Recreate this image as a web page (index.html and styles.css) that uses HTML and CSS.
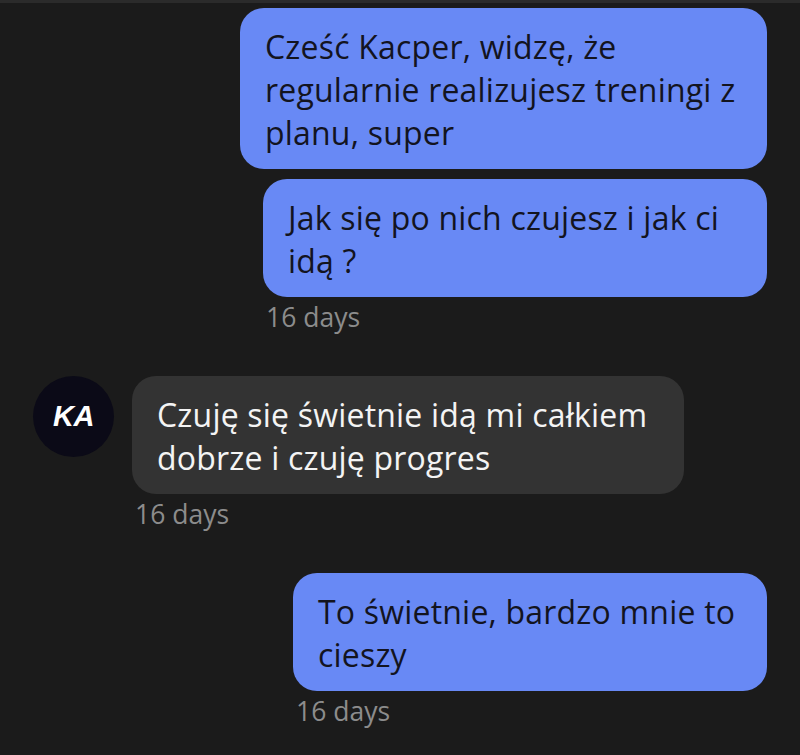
FILE: index.html
```html
<!DOCTYPE html>
<html lang="pl">
<head>
<meta charset="utf-8">
<title>Chat</title>
<link rel="stylesheet" href="styles.css">
</head>
<body>
<div class="topbar"></div>
<main class="thread">
  <div class="group group-out">
    <div class="bubble bubble-out w1">Cześć Kacper, widzę, że<br>regularnie realizujesz treningi z<br>planu, super</div>
    <div class="stack">
      <div class="bubble bubble-out w2">Jak się po nich czujesz i jak ci<br>idą ?</div>
      <div class="time">16 days</div>
    </div>
  </div>

  <div class="group group-in">
    <div class="avatar">KA</div>
    <div class="stack">
      <div class="bubble bubble-in w3">Czuję się świetnie idą mi całkiem<br>dobrze i czuję progres</div>
      <div class="time">16 days</div>
    </div>
  </div>

  <div class="group group-out">
    <div class="stack">
      <div class="bubble bubble-out w4">To świetnie, bardzo mnie to<br>cieszy</div>
      <div class="time">16 days</div>
    </div>
  </div>
</main>
</body>
</html>
```

FILE: styles.css
```css
* { box-sizing: border-box; }
html, body {
  margin: 0;
  padding: 0;
  background: #1b1b1b;
  height: 100%;
  overflow: hidden;
}
body {
  font-family: "Open Sans", "Noto Sans", sans-serif;
  color: #f2f2f2;
}
.topbar {
  height: 3px;
  background: #2b2b2b;
}
.thread {
  padding: 5px 33px 0 33px;
  display: flex;
  flex-direction: column;
}
.group {
  display: flex;
}
.group-out {
  flex-direction: column;
  align-items: flex-end;
  gap: 10px;
}
.group-in {
  margin-top: 43px;
  align-items: flex-start;
  gap: 18px;
}
.group-in + .group-out {
  margin-top: 43px;
}
.stack {
  display: flex;
  flex-direction: column;
  align-items: flex-start;
}
.bubble {
  font-size: 32px;
  letter-spacing: 0.2px;
  line-height: 43px;
  padding: 17px 25px 15px 25px;
  border-radius: 24px;
  white-space: nowrap;
}
.bubble-out {
  background: #6889f5;
  color: #13141f;
}
.bubble-in {
  background: #333333;
  color: #f4f4f4;
}
.w1 { width: 527px; }
.w2 { width: 504px; }
.w3 { width: 552px; }
.w4 { width: 474px; }
.time {
  font-size: 26.5px;
  line-height: 32px;
  color: #8c8c8c;
  margin: 4px 0 0 3px;
}
.avatar {
  width: 81px;
  height: 81px;
  border-radius: 50%;
  background: #0b0a17;
  color: #ffffff;
  display: flex;
  align-items: center;
  justify-content: center;
  font-family: "Liberation Sans", Arial, sans-serif;
  font-weight: 700;
  font-style: italic;
  font-size: 29px;
  letter-spacing: -0.5px;
}
```
